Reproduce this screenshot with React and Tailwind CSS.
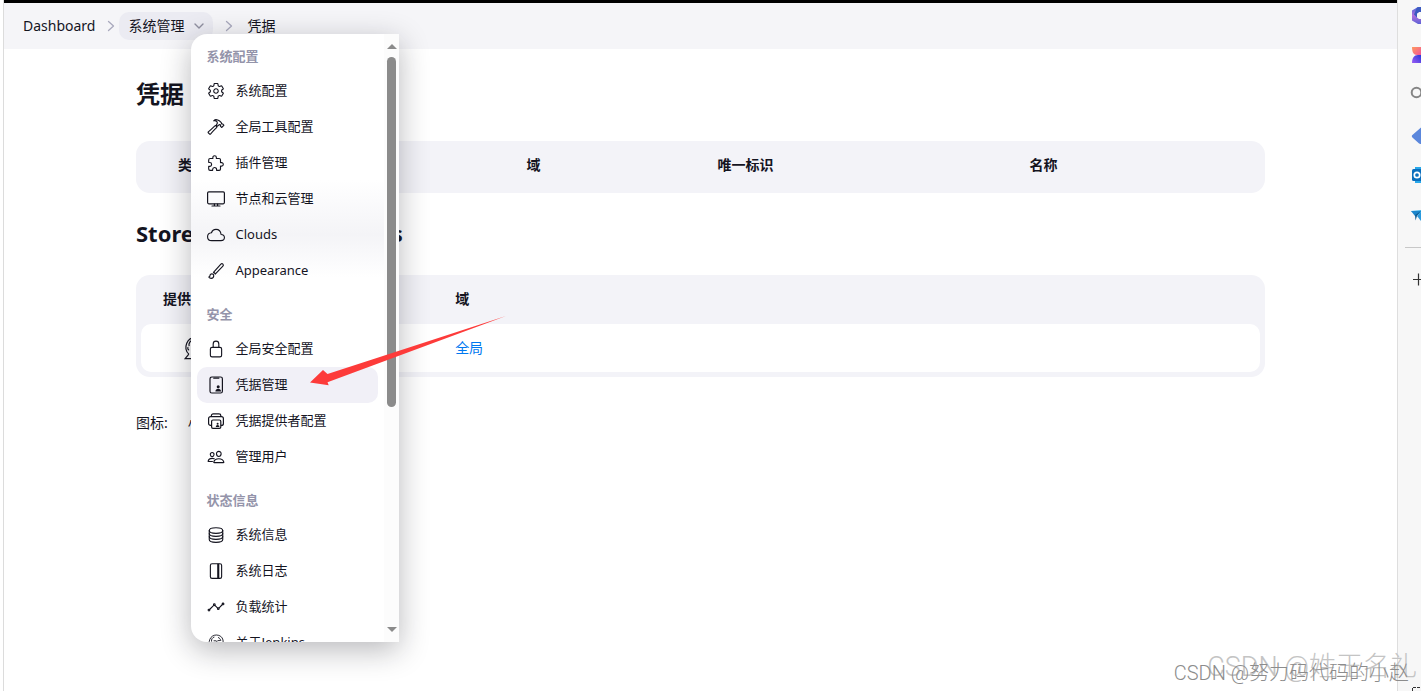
import {
  IoSettingsOutline,
  IoHammerOutline,
  IoExtensionPuzzleOutline,
  IoCloudOutline,
  IoBrushOutline,
  IoLockClosedOutline,
  IoPeopleOutline,
  IoServerOutline,
  IoJournalOutline,
  IoAnalyticsOutline,
} from "react-icons/io5";

// --- Custom icons ---
function MonitorIcon({ className }) {
  return (
    <svg viewBox="0 0 18 18" className={className} fill="none" stroke="currentColor" strokeWidth="1.2">
      <rect x="0.6" y="1.8" width="16.8" height="12" rx="1.2" />
      <path d="M7.4 14v1.6M10.6 14v1.6M5 16h8" strokeLinecap="round" />
    </svg>
  );
}

function CredentialsIcon({ className }) {
  return (
    <svg viewBox="0 0 18 18" className={className} fill="none" stroke="currentColor" strokeWidth="1.2">
      <rect x="3" y="1" width="12.4" height="16" rx="1.8" />
      <path d="M6.8 2.2h5" strokeLinecap="round" />
      <circle cx="11.2" cy="10.8" r="1.5" fill="currentColor" stroke="none" />
      <path d="M8.4 15.4c0-1.6 1.2-2.6 2.8-2.6s2.8 1 2.8 2.6z" fill="currentColor" stroke="none" />
    </svg>
  );
}

function ProvidersIcon({ className }) {
  return (
    <svg viewBox="0 0 18 18" className={className} fill="none" stroke="currentColor" strokeWidth="1.2">
      <path d="M4.4 4.2V3.6A1.8 1.8 0 0 1 6.2 1.8h5.8a1.8 1.8 0 0 1 1.8 1.8v.6" />
      <path d="M4.4 13.4H3.6a2 2 0 0 1-2-2V6.6a2 2 0 0 1 2-2h10.8a2 2 0 0 1 2 2v4.8a2 2 0 0 1-2 2h-.6" />
      <rect x="4.6" y="8" width="9.2" height="8.4" rx="1.4" />
      <circle cx="10.6" cy="11.8" r="1" fill="currentColor" stroke="none" />
      <path d="M8.8 15c0-1.2.8-1.9 1.8-1.9s1.8.7 1.8 1.9z" fill="currentColor" stroke="none" />
    </svg>
  );
}

function JenkinsIcon({ className }) {
  return (
    <svg viewBox="0 0 18 18" className={className} fill="none" stroke="currentColor" strokeWidth="0.9">
      <path d="M4.4 13.6C2.2 11.6 1.6 8.4 2.8 5.4 4 2.6 6.4 1 9.4 1c3.4 0 6 2 6.6 5 .5 2.6-.4 5.4-2.2 7.2" />
      <path d="M4.6 7.6C4 5.4 5.6 3.4 7.4 3M4 8.4c-.8.4-.4 2 .6 2M11 3.4c1.6.6 2.6 1.8 2.8 3.6" />
      <path d="M7 6.8h1.6M11 6.6h1.6M9.8 7v2M7.6 11c1.2 1 3 .9 4.2-.2" strokeLinecap="round" />
      <path d="M4.4 13.6 1.6 17h13.2l-1-3.6M7 14l2 1.4 2.6-1.2" />
    </svg>
  );
}

const sections = [
  {
    title: "系统配置",
    items: [
      { label: "系统配置", icon: IoSettingsOutline },
      { label: "全局工具配置", icon: IoHammerOutline },
      { label: "插件管理", icon: IoExtensionPuzzleOutline },
      { label: "节点和云管理", icon: MonitorIcon },
      { label: "Clouds", icon: IoCloudOutline },
      { label: "Appearance", icon: IoBrushOutline },
    ],
  },
  {
    title: "安全",
    items: [
      { label: "全局安全配置", icon: IoLockClosedOutline },
      { label: "凭据管理", icon: CredentialsIcon, active: true },
      { label: "凭据提供者配置", icon: ProvidersIcon },
      { label: "管理用户", icon: IoPeopleOutline },
    ],
  },
  {
    title: "状态信息",
    items: [
      { label: "系统信息", icon: IoServerOutline },
      { label: "系统日志", icon: IoJournalOutline },
      { label: "负载统计", icon: IoAnalyticsOutline },
      { label: "关于Jenkins", icon: JenkinsIcon },
    ],
  },
];

function Separator() {
  return (
    <svg viewBox="0 0 8 12" className="h-3 w-2 shrink-0" fill="none" stroke="#a9a9bd" strokeWidth="1.3">
      <path d="M1.5 1.5 6.5 6l-5 4.5" strokeLinecap="round" strokeLinejoin="round" />
    </svg>
  );
}

function DropdownMenu() {
  return (
    <div className="absolute left-[72px] top-[22px] z-10 flex h-[608px] w-[208px] overflow-hidden rounded-l-2xl bg-white bg-[linear-gradient(to_bottom,transparent_24%,#f4f4f7_33%,transparent_40%)] shadow-[0_8px_30px_rgba(20,20,31,0.3)]">
      <nav className="min-w-0 flex-1 overflow-hidden px-1.5 pt-[7px]">
        {sections.map((section) => (
          <div key={section.title} className="mb-2.5">
            <h3 className="flex h-8 items-center px-[9px] pb-0.5 text-[13px] font-bold text-[#9494aa]">{section.title}</h3>
            {section.items.map(({ label, icon: Icon, active }) => (
              <a
                key={label}
                href="#"
                className={`flex h-9 items-center gap-2.5 rounded-[10px] px-2.5 text-[13px] ${active ? "bg-[#f1f0f7]" : "hover:bg-[#f1f0f7]"}`}
              >
                <Icon className="h-[18px] w-[18px] shrink-0" />
                <span className="whitespace-nowrap pb-0.5">{label}</span>
              </a>
            ))}
          </div>
        ))}
      </nav>
      {/* Scrollbar */}
      <div className="flex w-[15px] flex-col items-center bg-[#fcfcfc] py-2.5 text-[#8b8b8b]">
        <svg viewBox="0 0 10 5" className="h-[5px] w-[10px]" fill="currentColor">
          <path d="M5 0 10 5H0z" />
        </svg>
        <div className="mt-2 h-[350px] w-[9px] rounded-full bg-[#8b8b8b]" />
        <svg viewBox="0 0 10 5" className="mt-auto h-[5px] w-[10px]" fill="currentColor">
          <path d="M0 0h10L5 5z" />
        </svg>
      </div>
    </div>
  );
}

function Breadcrumbs() {
  return (
    <header className="flex h-[46px] items-center bg-[#f5f5f8] px-[19px]">
      <a href="#" className="mr-3">Dashboard</a>
      <Separator />
      <div className="relative ml-1 mr-3">
        <button className="flex h-7 items-center gap-2.5 rounded-[10px] bg-[#ebebf2] px-[9px]">
          系统管理
          <svg viewBox="0 0 10 6" className="h-1.5 w-2.5" fill="none" stroke="#8f8fa0" strokeWidth="1.4">
            <path d="M1 1l4 4 4-4" strokeLinecap="round" strokeLinejoin="round" />
          </svg>
        </button>
        <DropdownMenu />
      </div>
      <Separator />
      <a href="#" className="ml-3.5">凭据</a>
    </header>
  );
}

function CredentialsTable() {
  return (
    <table className="mt-[30px] w-full table-fixed border-separate border-spacing-0 rounded-[14px] bg-[#f3f3f8] text-left">
      <thead>
        <tr className="h-[52px]">
          <th className="w-[33%] pb-1 pl-[42px]">类型</th>
          <th className="w-[17%] pb-1 pl-[18px]">域</th>
          <th className="w-[28%] pb-1 pl-[17px]">唯一标识</th>
          <th className="pb-1 pl-[13px]">名称</th>
        </tr>
      </thead>
    </table>
  );
}

function StoresTable() {
  return (
    <div className="mt-[25px] rounded-[14px] bg-[#f3f3f8] px-[5px] pb-[5px]">
      <table className="w-full table-fixed border-separate border-spacing-0 text-left">
        <thead>
          <tr className="h-[49px]">
            <th className="w-[27%] pb-0.5 pl-[22px]">提供者</th>
            <th className="pb-0.5 pl-3">域</th>
          </tr>
        </thead>
        <tbody>
          <tr className="h-12">
            <td className="rounded-l-[10px] bg-white pl-[42px]">
              <JenkinsIcon className="h-6 w-6" />
            </td>
            <td className="rounded-r-[10px] bg-white pl-3">
              <a href="#" className="text-[#0078f0]">全局</a>
            </td>
          </tr>
        </tbody>
      </table>
    </div>
  );
}

function BrowserSidebar() {
  return (
    <aside className="w-6 shrink-0 overflow-hidden border-l border-[#dedede] bg-[#f7f7f7]">
      <svg viewBox="0 0 23 691" width="23" height="691">
        <defs>
          <linearGradient id="hex" x1="0" y1="0" x2="0" y2="1">
            <stop offset="0" stopColor="#4a64d8" />
            <stop offset="0.5" stopColor="#b06fdc" />
            <stop offset="1" stopColor="#5d62d6" />
          </linearGradient>
          <linearGradient id="warm" x1="0" y1="0" x2="1" y2="1">
            <stop offset="0" stopColor="#ff9a5c" />
            <stop offset="1" stopColor="#f2559a" />
          </linearGradient>
          <linearGradient id="cool" x1="0" y1="1" x2="1" y2="0">
            <stop offset="0" stopColor="#9b5cf5" />
            <stop offset="1" stopColor="#2a38d8" />
          </linearGradient>
        </defs>
        <path d="M23 7h-3l-6 3.5v10L20 24h3v-5h-2l-2-1.5v-4L21 12h2z" fill="url(#hex)" />
        <path d="M19 7.6 23 7v5h-2l-2 1.5v4l-3-3z" fill="#3c5bc0" />
        <path d="M14 47h9v8h-4c-3.5 0-5-3-5-8z" fill="url(#warm)" />
        <path d="M14 63c0-5 2-8 6-8h3v8z" fill="url(#cool)" />
        <circle cx="18.5" cy="92.5" r="4.8" fill="none" stroke="#858585" strokeWidth="2" />
        <path d="M23 127.5l-8.6 7.5c-.8.7-.8 1.7 0 2.4l6.1 5.6c.8.8 1.6 1 2.5 1z" fill="#5b87dc" />
        <rect x="17" y="167" width="8" height="16" fill="#28a8ea" />
        <rect x="14" y="169" width="12" height="12" rx="1.5" fill="#0a6ebd" />
        <circle cx="19" cy="175" r="2.7" fill="none" stroke="#ffffff" strokeWidth="1.7" />
        <path d="M13 211l10-1v4l-5 1z" fill="#3db4ee" />
        <path d="M13 211h10l-6 5z" fill="#1b86cc" />
        <path d="M17 215l6-4-4 5-1.5 4.5z" fill="#0f5e96" />
        <path d="M19 216l4-4v9z" fill="#2a9ade" />
        <path d="M7 247.5h16" stroke="#c8c8c8" />
        <path d="M15 279.5h8M20.5 273.5v12" stroke="#333333" strokeWidth="1.2" />
        <path d="M14.5 691v-3.5h8.5" fill="none" stroke="#333333" strokeDasharray="3 1" />
      </svg>
    </aside>
  );
}

export default function App() {
  return (
    <div className="relative flex h-screen overflow-hidden bg-white pl-[3px] font-['Noto_Sans','Noto_Sans_CJK_SC',sans-serif] text-sm text-[#14141f]">
      <div className="min-w-0 flex-1 border-l border-[#dcdcdc]">
        <div className="h-[3px] bg-black" />
        <Breadcrumbs />
        <main className="px-[132px] pt-7">
          <h1 className="text-2xl font-bold leading-[34px]">凭据</h1>
          <CredentialsTable />
          <h2 className="mt-[23px] text-[22px] font-bold leading-[34px]">Stores scoped to Jenkins</h2>
          <StoresTable />
          <div className="mt-9 flex gap-5">
            <span>图标:</span>
            <span>小</span>
          </div>
        </main>
      </div>
      <BrowserSidebar />

      {/* Pointer arrow over the menu */}
      <svg viewBox="0 0 196 70" className="absolute left-[310px] top-[316px] z-20 h-[70px] w-[196px]" fill="#fd3b3a">
        <path d="M0 66.5 13 54l4.5 4L196 0 17.5 66.3l1.2 3z" />
      </svg>

      {/* Watermarks */}
      <div className="absolute bottom-2 right-1 z-20 whitespace-nowrap font-[Roboto,'Noto_Sans_CJK_SC',sans-serif] text-[27px] font-light leading-8 text-[#c4c4c4]">CSDN @姓王名礼</div>
      <div className="absolute bottom-1.5 right-3 z-20 whitespace-nowrap font-[Roboto,'Noto_Sans_CJK_SC',sans-serif] text-[20px] font-light leading-6 text-[#8c8c8c]">CSDN @努力码代码的小赵</div>
    </div>
  );
}
